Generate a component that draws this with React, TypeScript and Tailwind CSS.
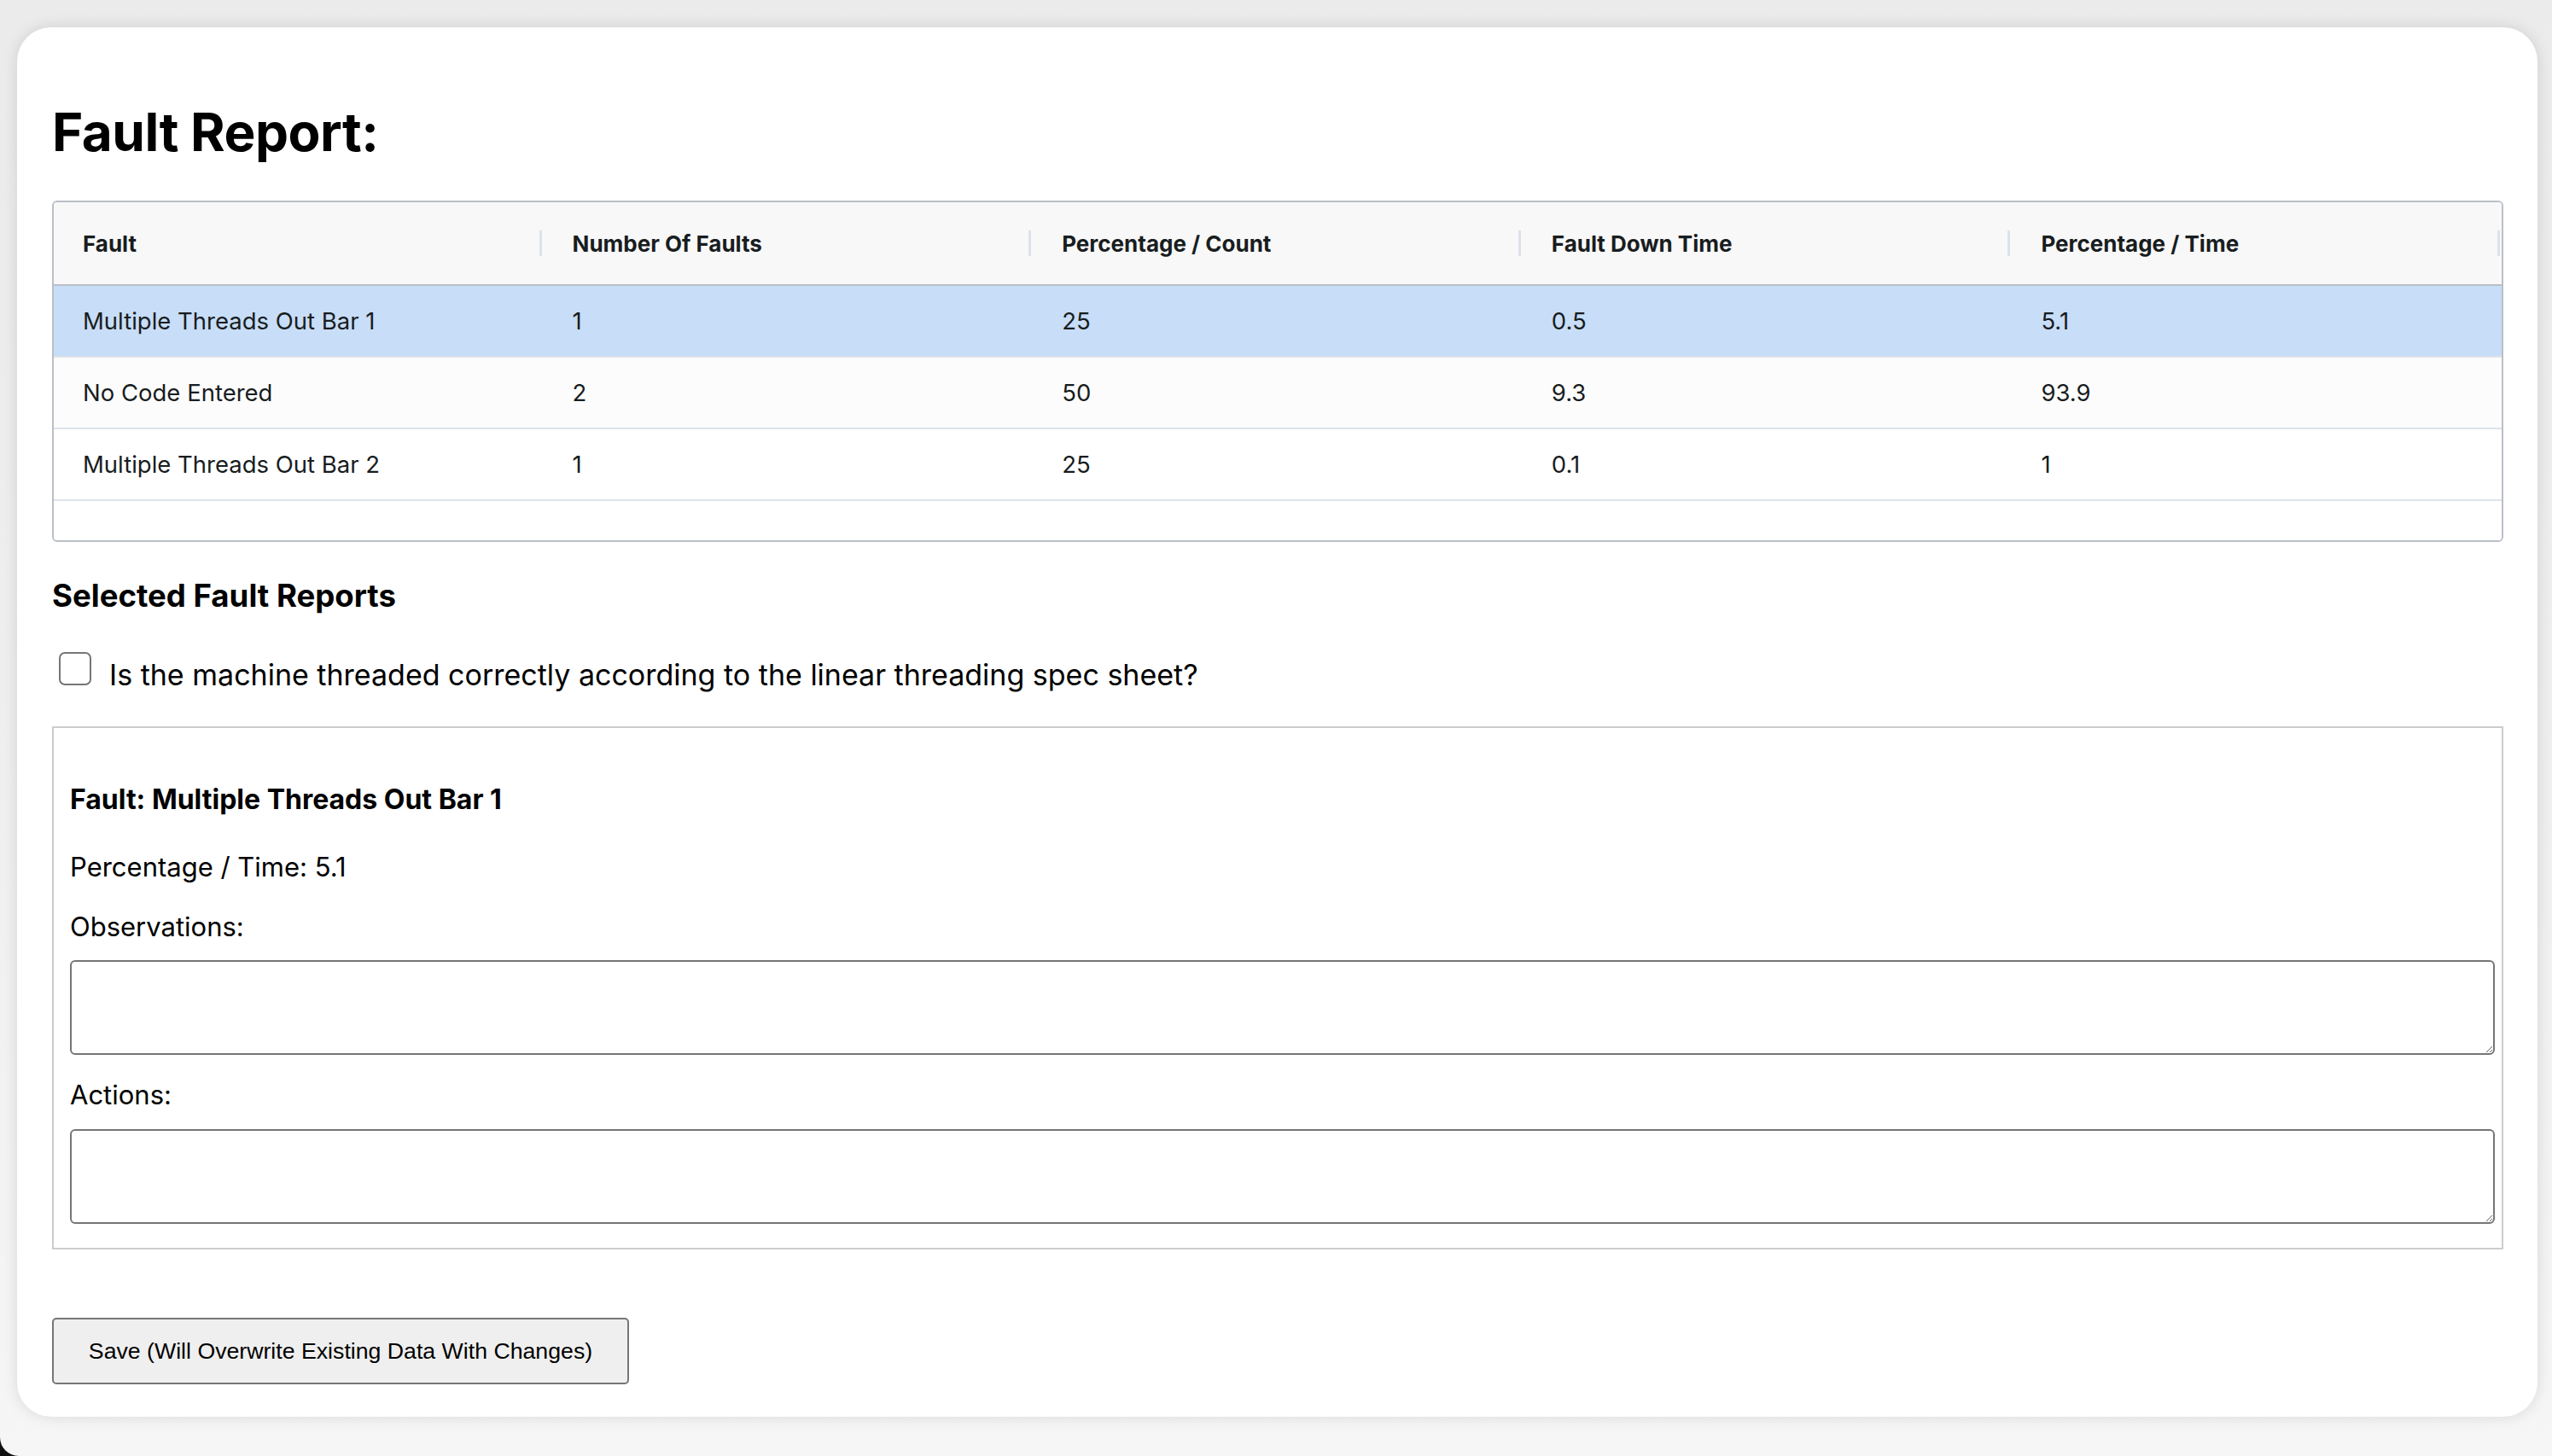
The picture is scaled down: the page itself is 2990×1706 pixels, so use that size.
import { useState } from 'react';

const COLUMNS = ['Fault', 'Number Of Faults', 'Percentage / Count', 'Fault Down Time', 'Percentage / Time'];

interface FaultRow {
  fault: string;
  count: number;
  pctCount: number;
  downTime: number;
  pctTime: number;
}

const ROWS: FaultRow[] = [
  { fault: 'Multiple Threads Out Bar 1', count: 1, pctCount: 25, downTime: 0.5, pctTime: 5.1 },
  { fault: 'No Code Entered', count: 2, pctCount: 50, downTime: 9.3, pctTime: 93.9 },
  { fault: 'Multiple Threads Out Bar 2', count: 1, pctCount: 25, downTime: 0.1, pctTime: 1 },
];

export default function App() {
  const [selected, setSelected] = useState(0);
  const [threaded, setThreaded] = useState(false);
  const [obs, setObs] = useState('');
  const [actions, setActions] = useState('');
  const row = ROWS[selected];

  return (
    <div className="w-[2990px] h-[1706px] bg-[#111]">
      <div className="h-full rounded-bl-[22px] bg-gradient-to-b from-[#ebebeb] via-[#efefef] to-[#f6f6f6] pt-[32px] pl-[20px] pr-[17px] font-['Inter',sans-serif] text-black">
        <div className="h-[1628px] bg-white rounded-[40px] shadow-[0_0_18px_rgba(0,0,0,0.12)] pl-[41px] pr-[40px] pt-[92px]">
          <h1 className="text-[62px] leading-[62px] font-bold tracking-[-0.5px]">Fault Report:</h1>

          {/* Grid */}
          <div className="mt-[49px] border-2 border-[#babfc7] rounded-[6px] overflow-hidden text-[#181d1f]">
            <div className="grid grid-cols-5 bg-[#f8f8f8] border-b-2 border-[#babfc7] h-[98px]">
              {COLUMNS.map((c) => (
                <div key={c} className="flex items-center justify-between pl-[34px]">
                  <span className="text-[26px] font-bold">{c}</span>
                  <div className="w-[3px] h-[30px] bg-[#dde2eb] mr-[2px]" />
                </div>
              ))}
            </div>
            {ROWS.map((r, i) => (
              <div
                key={r.fault}
                onClick={() => setSelected(i)}
                className={`grid grid-cols-5 h-[84px] pt-[2px] border-b-2 border-[#dde2eb] text-[27.5px] cursor-pointer ${
                  i === selected ? 'bg-[#c8ddf7]' : i % 2 === 1 ? 'bg-[#fcfcfc]' : 'bg-white'
                }`}
              >
                {[r.fault, r.count, r.pctCount, r.downTime, r.pctTime].map((v, j) => (
                  <div key={j} className="flex items-center pl-[34px]">{v}</div>
                ))}
              </div>
            ))}
            <div className="h-[46px] bg-white" />
          </div>

          <h3 className="mt-[41px] text-[36.6px] leading-[45px] font-bold">Selected Fault Reports</h3>

          <label className="mt-[43px] flex items-start gap-[21px] ml-[8px]">
            <input
              type="checkbox"
              checked={threaded}
              onChange={(e) => setThreaded(e.target.checked)}
              className="appearance-none w-[38px] h-[39px] border-2 border-[#767676] rounded-[7px] bg-white checked:bg-[#0075ff]"
            />
            <span className="text-[34px] leading-[40px] mt-[7px]">
              Is the machine threaded correctly according to the linear threading spec sheet?
            </span>
          </label>

          {/* Selected fault panel */}
          <div className="mt-[40px] border-2 border-[#cccccc] pl-[19px] pr-[8px] pt-[64px] pb-[28px]">
            <h4 className="text-[32px] leading-[40px] font-bold">Fault: {row.fault}</h4>
            <p className="mt-[39px] text-[31px] leading-[40px]">Percentage / Time: {row.pctTime}</p>
            <p className="mt-[30px] text-[31px] leading-[40px]">Observations:</p>
            <textarea
              value={obs}
              onChange={(e) => setObs(e.target.value)}
              className="mt-[19px] block w-full h-[111px] border-2 border-[#767676] rounded-[6px] bg-white"
            />
            <p className="mt-[27px] text-[31px] leading-[40px]">Actions:</p>
            <textarea
              value={actions}
              onChange={(e) => setActions(e.target.value)}
              className="mt-[20px] block w-full h-[111px] border-2 border-[#767676] rounded-[6px] bg-white"
            />
          </div>

          <button className="mt-[80px] w-[676px] h-[78px] bg-[#efefef] border-2 border-[#767676] rounded-[5px] text-[26.7px] font-['Liberation_Sans',Arial,sans-serif] text-black">
            Save (Will Overwrite Existing Data With Changes)
          </button>
        </div>
      </div>
    </div>
  );
}
